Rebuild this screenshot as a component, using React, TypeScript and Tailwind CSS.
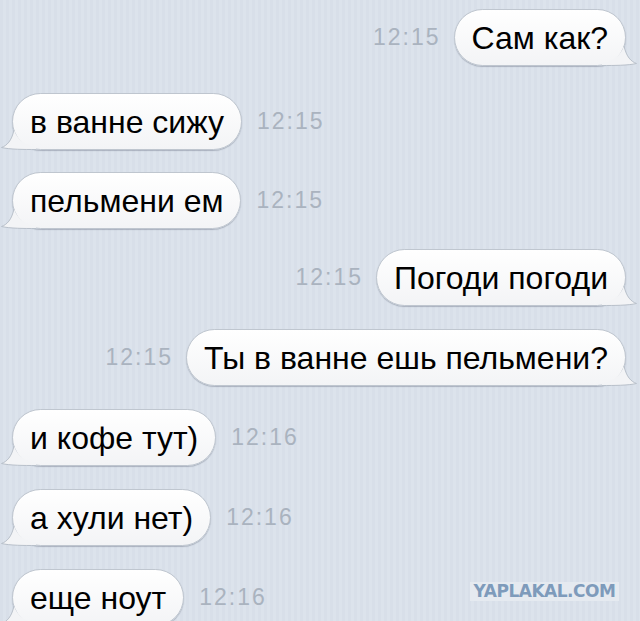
const msgs: { text: string; time: string; me: boolean; mt: string }[] = [
  { text: "Сам как?", time: "12:15", me: true, mt: "mt-[9px]" },
  { text: "в ванне сижу", time: "12:15", me: false, mt: "mt-[27px]" },
  { text: "пельмени ем", time: "12:15", me: false, mt: "mt-[22px]" },
  { text: "Погоди погоди", time: "12:15", me: true, mt: "mt-[20px]" },
  { text: "Ты в ванне ешь пельмени?", time: "12:15", me: true, mt: "mt-[23px]" },
  { text: "и кофе тут)", time: "12:16", me: false, mt: "mt-[23px]" },
  { text: "а хули нет)", time: "12:16", me: false, mt: "mt-[23px]" },
  { text: "еще ноут", time: "12:16", me: false, mt: "mt-[23px]" },
];

// curl at the bottom corner of a bubble, drawn over the bubble's border
function Tail({ me }: { me: boolean }) {
  return (
    <svg
      width="36"
      height="25"
      viewBox="0 0 36 25"
      className={
        me
          ? "pointer-events-none absolute -right-[12px] -bottom-[1px]"
          : "pointer-events-none absolute -left-[12px] -bottom-[1px] -scale-x-100"
      }
    >
      <path
        d="M0 23.5 C12 23.5 26 23.5 34.5 21.5 C29 19.5 24.5 15 22 4 C19 13 11 19.5 0 21 Z"
        fill="#f3f4f6"
      />
      <path
        d="M0 23.5 C12 23.5 26 23.5 34.5 21.5 C29 19.5 24.5 15 22 4"
        fill="none"
        stroke="#b8c0ca"
        strokeWidth="1"
      />
    </svg>
  );
}

function Bubble({ text, me }: { text: string; me: boolean }) {
  return (
    <div className="relative">
      <div className="flex h-[57px] items-center rounded-full border border-[#bfc6cf] bg-gradient-to-b from-white to-[#f3f4f6] px-[17px] text-[32px] leading-none text-black shadow-[0_1px_1px_rgba(60,70,90,0.3)]">
        {text}
      </div>
      <Tail me={me} />
    </div>
  );
}

function Time({ time }: { time: string }) {
  return <span className="text-[23px] tracking-[2px] text-[#aab3bf]">{time}</span>;
}

export default function App() {
  return (
    <div
      className="relative h-[621px] w-[640px] overflow-hidden bg-[repeating-linear-gradient(90deg,#d8dfe9_0px,#d8dfe9_3px,#dce3ec_3px,#dce3ec_6px)]"
      style={{ fontFamily: '"Liberation Sans", Arial, sans-serif' }}
    >
      {msgs.map((m, i) =>
        m.me ? (
          <div key={i} className={`flex items-center justify-end gap-[13px] pr-[14px] ${m.mt}`}>
            <Time time={m.time} />
            <Bubble text={m.text} me />
          </div>
        ) : (
          <div key={i} className={`flex items-center gap-[15px] pl-[12px] ${m.mt}`}>
            <Bubble text={m.text} me={false} />
            <Time time={m.time} />
          </div>
        )
      )}
      <div
        className="absolute left-[470px] top-[582px] flex h-[19px] w-[149px] items-center justify-center bg-[#e5eaf0] text-[17px] font-black tracking-[-0.5px] text-[#7e9bbb]"
        style={{ fontFamily: '"DejaVu Sans", sans-serif' }}
      >
        YAPLAKAL.COM
      </div>
    </div>
  );
}
